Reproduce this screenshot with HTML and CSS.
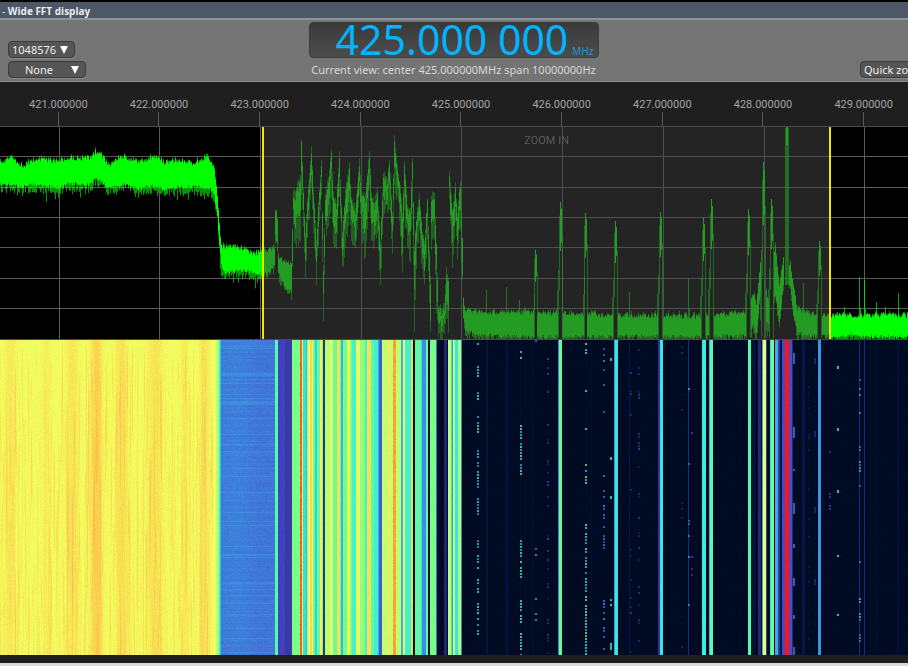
FILE: index.html
```html
<!DOCTYPE html>
<html lang="en">
  <head>
    <meta charset="utf-8" />
    <meta name="viewport" content="width=device-width, initial-scale=1" />
    <title>Wide FFT display</title>
    <link rel="icon" href="data:," />
    <link rel="stylesheet" href="styles.css">
  </head>

  <body>
    <header class="titlebar">- <b>Wide FFT display</b></header>

    <div class="toolbar">
      <div class="selects">
        <select class="control fft-size" aria-label="FFT size">
          <option>1048576</option>
        </select>
        <select class="control averaging" aria-label="Averaging">
          <option>None</option>
        </select>
      </div>
      <div class="tuner">
        <output class="frequency"><span class="digits">425.000 000</span><span class="unit">MHz</span></output>
        <div class="view-info">Current view: center 425.000000MHz span 10000000Hz</div>
      </div>
      <div class="actions">
        <button type="button" class="control quick-zoom">Quick zoom</button>
      </div>
    </div>

    <main>
      <div class="axis">
        <span>421.000000</span>
        <span>422.000000</span>
        <span>423.000000</span>
        <span>424.000000</span>
        <span>425.000000</span>
        <span>426.000000</span>
        <span>427.000000</span>
        <span>428.000000</span>
        <span>429.000000</span>
      </div>
      <div class="spectrum">
        <canvas id="spectrum" width="908" height="212"></canvas>
        <div class="zoom-area">ZOOM IN</div>
      </div>
      <canvas id="waterfall" width="908" height="315"></canvas>
    </main>
    <footer></footer>
    <script src="script.js"></script>
  </body>
</html>
```

FILE: styles.css
```css
* {
  box-sizing: border-box;
}
body {
  margin: 0;
  background-color: #1f1f1f;
  color: #d8d8d8;
  font-family: "Noto Sans", "Open Sans", sans-serif;
  font-size: 11px;
  overflow-x: hidden;
}
.titlebar {
  height: 20px;
  padding-left: 2px;
  border-top: 2px solid #000;
  border-bottom: 2px solid #8c9494;
  background-color: #4d5767;
  color: #eee;
  font-family: "Open Sans", sans-serif;
  font-size: 10px;
  line-height: 18px;
}
.toolbar {
  display: grid;
  grid-template-columns: 1fr auto 1fr;
  height: 62px;
  padding: 2px 0 3px 8px;
  border-bottom: 1px solid #8c8c8c;
  background-color: #747474;
  overflow: hidden;
}
.selects {
  display: flex;
  flex-direction: column;
  align-items: flex-start;
  justify-content: flex-end;
  gap: 3px;
}
.control {
  height: 17px;
  margin: 0;
  padding: 0 3px;
  border: 1px solid #3c3c3c;
  border-radius: 4px;
  background-color: #555;
  color: #eee;
  font-family: inherit;
  font-size: 11px;
  line-height: 14px;
  box-shadow: 0 1px 0 #868686;
}
select.control {
  appearance: none;
  background-image: url("data:image/svg+xml,%3Csvg xmlns='http://www.w3.org/2000/svg' width='8' height='8'%3E%3Cpath d='M0 0h8L4 8z' fill='white'/%3E%3C/svg%3E");
  background-repeat: no-repeat;
  background-position: right 6px center;
}
.fft-size {
  width: 67px;
}
.averaging {
  width: 78px;
  padding-left: 16px;
}
.tuner {
  width: 290px;
  margin-right: 9px;
}
.frequency {
  display: flex;
  align-items: baseline;
  justify-content: flex-end;
  gap: 4px;
  height: 36px;
  padding-right: 4px;
  border: 1px solid #3c3c3c;
  border-radius: 4px;
  background-image: linear-gradient(#3a3a3a, #4c4c4c);
  color: #00b4ff;
  line-height: 32px;
}
.digits {
  font-size: 41px;
}
.unit {
  color: #0e9ad8;
  font-size: 10px;
}
.view-info {
  margin-top: 4px;
  line-height: 16px;
  text-align: center;
  white-space: nowrap;
}
.actions {
  display: flex;
  align-items: flex-end;
  justify-content: flex-end;
}
.quick-zoom {
  width: 72px;
  margin-right: -24px;
  text-align: left;
  white-space: nowrap;
}
main {
  overflow: hidden;
}
.axis {
  display: grid;
  grid-template-columns: repeat(9, 1fr);
  height: 45px;
  margin-right: -6px;
  padding: 15px 0 0 8px;
  border-bottom: 1px solid #4a4a4a;
  color: #a4a4a4;
  font-family: "Liberation Sans Narrow", "Roboto", sans-serif;
  font-size: 11px;
  line-height: 15px;
  text-align: center;
}
.axis span::after {
  content: "";
  display: block;
  width: 1px;
  height: 14px;
  margin: 0 auto;
  background-color: #5a5a5a;
}
canvas {
  display: block;
  width: 100%;
}
.spectrum {
  position: relative;
  border-bottom: 1px solid #4a4a4a;
}
#spectrum {
  height: 212px;
}
#waterfall {
  height: 315px;
}
.zoom-area {
  position: absolute;
  top: 0;
  bottom: 0;
  left: 28.9%;
  right: 8.5%;
  padding-top: 6px;
  border: solid #f0e800;
  border-width: 0 2px;
  background-color: rgba(68, 68, 68, 0.53);
  color: #5c5c5c;
  font-family: "Liberation Sans Narrow", "Roboto", sans-serif;
  font-size: 11px;
  line-height: 15px;
  text-align: center;
}
footer {
  height: 11px;
  border-bottom: 3px solid #dcdad5;
}
```

FILE: script.js
```javascript
var seed = 7;
function rnd() {
  seed = (seed * 16807) % 2147483647;
  return seed / 2147483647;
}

// trace envelope: x, top, bottom
var envelope = [
  [0, 37, 60], [10, 31, 60], [22, 40, 62], [33, 34, 60], [58, 34, 63], [68, 32, 59],
  [90, 32, 60], [95, 26, 54], [101, 29, 56], [109, 39, 64], [118, 31, 61], [124, 31, 60],
  [138, 36, 64], [155, 31, 60], [165, 36, 65], [178, 34, 62], [193, 37, 62], [204, 32, 62],
  [209, 32, 63], [214, 41, 71], [217, 72, 92], [219, 100, 118], [221, 120, 140], [225, 122, 149],
  [230, 121, 147], [245, 122, 146], [252, 127, 147], [263, 126, 150], [270, 122, 147],
  [274, 121, 140], [275, 83, 112], [277, 92, 120], [278, 129, 148], [282, 135, 157],
  [287, 138, 165], [291, 137, 166], [292, 105, 135], [293, 64, 90], [295, 68, 112],
  [300, 50, 105], [301, 14, 55], [303, 65, 90], [305, 108, 138], [308, 60, 90], [311, 25, 58],
  [313, 62, 92], [316, 115, 144], [318, 78, 106], [321, 35, 60], [323, 140, 181],
  [325, 66, 95], [327, 60, 98], [331, 28, 65], [333, 68, 110], [336, 75, 112], [339, 26, 60],
  [342, 108, 138], [345, 65, 112], [349, 41, 78], [351, 72, 100], [355, 85, 118],
  [359, 34, 66], [361, 66, 94], [365, 70, 130], [369, 25, 54], [371, 70, 105], [374, 76, 112],
  [377, 64, 98], [380, 115, 157], [383, 50, 76], [387, 55, 80], [389, 38, 70],
  [392, 84, 120], [394, 13, 50], [398, 48, 72], [400, 60, 98], [402, 88, 135], [404, 36, 76],
  [407, 82, 112], [410, 85, 125], [412, 33, 68], [414, 120, 193], [417, 83, 105],
  [419, 70, 98], [422, 108, 140], [424, 118, 154], [427, 73, 98], [430, 155, 202],
  [431, 72, 115], [434, 68, 98], [436, 120, 170], [438, 180, 203], [441, 184, 206],
  [444, 178, 200], [446, 146, 183], [448, 150, 190], [449, 47, 70], [452, 86, 130],
  [455, 60, 86], [457, 88, 128], [460, 56, 92], [462, 112, 150], [463, 172, 193],
  [465, 184, 205], [480, 186, 210], [520, 186, 212], [560, 187, 212], [620, 189, 211],
  [700, 190, 212], [745, 187, 211], [753, 166, 200], [756, 180, 210], [760, 135, 165],
  [762, 148, 195], [768, 176, 198], [775, 120, 170], [779, 160, 198], [783, 132, 160],
  [786, 150, 158], [790, 138, 160], [793, 160, 190], [797, 182, 208], [805, 186, 211],
  [825, 189, 211], [908, 189, 212]
];

// carriers: x, top, half width
var spikes = [
  [486, 163, 1], [506, 160, 1], [519, 173, 1], [535, 123, 2], [560, 75, 3], [585, 86, 2],
  [615, 94, 3], [629, 165, 1], [660, 85, 3], [688, 151, 1], [703, 91, 3], [711, 72, 3],
  [748, 82, 3], [763, 35, 3], [771, 72, 3], [786, 0, 3], [803, 156, 1], [819, 114, 3],
  [844, 180, 1], [859, 150, 1], [864, 153, 1], [876, 175, 1], [885, 180, 1], [898, 166, 1]
];

function drawSpectrum() {
  var ctx = document.getElementById("spectrum").getContext("2d");
  ctx.fillStyle = "#000";
  ctx.fillRect(0, 0, 908, 212);
  ctx.fillStyle = "#5a5a5a";
  [29, 60, 90, 120, 151, 181].forEach((y) => ctx.fillRect(0, y, 908, 1));
  [59, 159, 260, 361, 461, 562, 663, 764, 864].forEach((x) =>
    ctx.fillRect(x, 0, 1, 212)
  );

  var k = 0;
  for (var x = 0; x < 908; x++) {
    while (envelope[k + 1][0] <= x) k++;
    var a = envelope[k];
    var b = envelope[k + 1];
    var t = (x - a[0]) / (b[0] - a[0]);
    var top = a[1] + (b[1] - a[1]) * t;
    var bottom = a[2] + (b[2] - a[2]) * t;
    var inGap = spikes.some((s) => s[2] > 1 && Math.abs(s[0] - x) < s[2]);
    if (inGap) continue;
    var busy = x > 292 && x < 462;
    top += rnd() * 5 - 3;
    bottom -= rnd() * 4;
    if (busy) {
      // bursts fade towards their feet
      var core = (bottom - top) * (0.45 + rnd() * 0.35);
      ctx.fillStyle = "rgba(0, 255, 0, 0.5)";
      ctx.fillRect(x, top - rnd() * 5, 1, bottom - top + 5 + rnd() * 14);
      ctx.fillStyle = "#00ff00";
      ctx.fillRect(x, top + rnd() * 6, 1, core);
      continue;
    }
    ctx.fillStyle = "#00ff00";
    ctx.fillRect(x, top, 1, bottom - top);
    // sparse lower tail
    ctx.fillStyle = "rgba(0, 255, 0, 0.6)";
    ctx.fillRect(x, bottom, 1, rnd() * 9 + (rnd() > 0.94 ? 7 : 0));
    ctx.fillRect(x, top - rnd() * 3, 1, 4);
  }

  spikes.forEach(([x, top, half]) => {
    var h = 211 - top;
    if (half == 1) {
      ctx.fillStyle = "rgba(0, 255, 0, 0.65)";
      ctx.fillRect(x, top, 1, h);
      ctx.fillRect(x + 1, top + h * 0.5, 1, h * 0.3);
      return;
    }
    if (top == 0) {
      ctx.fillStyle = "rgba(0, 255, 0, 0.6)";
      ctx.fillRect(x - 1, 1, 4, 157);
      ctx.fillStyle = "#00ff00";
      ctx.fillRect(x, 0, 2, 18);
      return;
    }
    ctx.fillStyle = "#00ff00";
    ctx.fillRect(x, top, 1, h * 0.36);
    ctx.fillRect(x + 1, top + h * 0.05, 1, h * 0.25);
    ctx.fillStyle = "rgba(0, 255, 0, 0.55)";
    ctx.fillRect(x - 1, top + h * 0.1, 1, h * 0.55);
    ctx.fillRect(x + 2, top + h * 0.25, 1, h * 0.75);
    ctx.fillRect(x - half + 1, top + h * 0.5, 1, h * 0.5);
    ctx.fillRect(x - half, top + h * 0.65, 1, h * 0.25);
  });
}

var palette = [
  [0, 0, 9, 29], [0.12, 0, 26, 78], [0.25, 48, 46, 140], [0.33, 68, 68, 196],
  [0.45, 62, 128, 220], [0.55, 54, 180, 232], [0.62, 56, 240, 216],
  [0.7, 120, 255, 134], [0.8, 242, 255, 96], [0.88, 255, 176, 64], [1, 255, 16, 12]
];

function color(v) {
  v = Math.max(0, Math.min(1, v));
  var i = 0;
  while (i < palette.length - 2 && palette[i + 1][0] < v) i++;
  var p = palette[i];
  var q = palette[i + 1];
  var t = (v - p[0]) / (q[0] - p[0]);
  return [1, 2, 3].map((c) => p[c] + (q[c] - p[c]) * t);
}

// steady signals: x, width, level
var stripes = [
  [0, 216, 0.8], [216, 2, 0.76], [218, 1, 0.71], [219, 1, 0.65], [220, 1, 0.56],
  [221, 54, 0.44], [275, 3, 0.66], [278, 7, 0.32], [285, 7, 0.29], [292, 8, 0.7],
  [300, 2, 0.94], [302, 1, 0.77], [303, 3, 0.6], [306, 1, 0.56], [307, 1, 0.72],
  [308, 5, 0.8], [310, 2, 0.84], [313, 2, 0.68], [315, 2, 0.58], [317, 3, 0.68],
  [320, 2, 0.82], [322, 1, 0.7], [323, 2, 0.25], [325, 5, 0.75], [330, 3, 0.79],
  [333, 4, 0.68], [337, 3, 0.83], [340, 1, 0.68], [341, 2, 0.55], [343, 4, 0.69],
  [347, 3, 0.81], [350, 2, 0.7], [352, 4, 0.64], [356, 4, 0.79], [360, 5, 0.72],
  [365, 2, 0.64], [367, 4, 0.83], [371, 3, 0.67], [374, 4, 0.63], [378, 1, 0.55],
  [379, 3, 0.38], [382, 12, 0.76], [388, 2, 0.82], [393, 3, 0.89], [396, 5, 0.76],
  [401, 2, 0.55], [403, 2, 0.8], [405, 6, 0.63], [411, 2, 0.84], [413, 2, 0.05],
  [415, 6, 0.67], [421, 1, 0.6], [422, 4, 0.48], [426, 2, 0.67], [428, 2, 0.05],
  [430, 6, 0.7], [436, 1, 0.4], [444, 3, 0.2], [448, 3, 0.76], [451, 1, 0.6],
  [452, 1, 0.5], [453, 2, 0.76], [455, 3, 0.61], [458, 3, 0.74], [461, 1, 0.45],
  [486, 2, 0.09], [506, 2, 0.08], [520, 1, 0.05], [532, 1, 0.06], [558, 1, 0.44],
  [559, 3, 0.68], [591, 1, 0.05], [614, 1, 0.5], [615, 3, 0.61], [629, 1, 0.12],
  [658, 2, 0.27], [660, 3, 0.61], [688, 1, 0.22], [702, 4, 0.62], [709, 1, 0.55],
  [710, 3, 0.67], [748, 3, 0.66], [753, 2, 0.08], [758, 3, 0.22], [762, 1, 0.55],
  [763, 3, 0.8], [766, 1, 0.3], [770, 1, 0.6], [771, 3, 0.69], [775, 3, 0.54],
  [778, 2, 0.28], [780, 2, 0.1], [782, 3, 0.34], [785, 4, 1], [789, 3, 0.35],
  [792, 1, 0.22], [802, 3, 0.11], [814, 1, 0.05], [818, 3, 0.49], [859, 1, 0.2],
  [864, 1, 0.2], [876, 1, 0.06], [897, 2, 0.07]
];

// keyed signals: x, level, chance, then on/off ranges
var bursts = [
  [477, 0.58, 0.6, [3, 9], [23, 44], [52, 93], [107, 174], [191, 306]],
  [520, 0.62, 0.65, [8, 18], [85, 134], [200, 315]],
  [535, 0.5, 0.25, [0, 3], [205, 235], [255, 302]],
  [547, 0.25, 0.22, [0, 315]],
  [585, 0.63, 0.75, [0, 15], [50, 53], [88, 91], [124, 145], [184, 315]],
  [603, 0.45, 0.35, [8, 85], [120, 220], [260, 310]],
  [610, 0.64, 1, [18, 21], [117, 120], [156, 159], [259, 261], [264, 266], [303, 310]],
  [630, 0.24, 0.13, [20, 315]],
  [638, 0.25, 0.25, [0, 65], [90, 315]],
  [681, 0.18, 0.12, [0, 315]],
  [688, 0.45, 0.12, [0, 315]],
  [691, 0.26, 0.25, [40, 52], [80, 110], [195, 235]],
  [793, 0.45, 1, [13, 24], [87, 98], [129, 131], [163, 174], [204, 208], [238, 246], [275, 279], [307, 315]],
  [808, 0.1, 0.3, [10, 315]],
  [814, 0.22, 1, [18, 24], [91, 97], [167, 173], [239, 245]],
  [829, 0.25, 0.3, [72, 76], [111, 114], [153, 170]],
  [837, 0.66, 1, [26, 29], [88, 91], [150, 153], [215, 217], [274, 276]],
  [859, 0.5, 0.35, [15, 57], [72, 75], [103, 150], [218, 222], [258, 302]]
];

// warmer columns of the wide carrier on the left: x, spread, gain
var warm = [
  [10, 6, 0.02], [46, 5, 0.014], [72, 6, 0.024], [96, 6, 0.04],
  [121, 6, 0.028], [155, 8, 0.026], [184, 4, 0.018], [204, 5, 0.026]
];

function drawWaterfall() {
  var ctx = document.getElementById("waterfall").getContext("2d");
  var img = ctx.createImageData(908, 315);
  var levels = new Array(908).fill(0.015);
  stripes.forEach(([x, w, v]) => levels.fill(v, x, x + w));

  var rows = [];
  for (var y = 0; y < 315; y++) {
    rows.push(rnd() > 0.88 ? 0.04 : rnd() * 0.02);
  }

  for (var x = 0; x < 908; x++) {
    var base = levels[x];
    var streak = 0;
    var target = 0;
    var hot = 0;
    warm.forEach(([c, w, gain]) => {
      hot += Math.exp(-Math.pow((x - c) / w, 2)) * gain;
    });
    for (var y = 0; y < 315; y++) {
      var v = base;
      if (x < 218) {
        if (rnd() > 0.98) target = Math.pow(rnd(), 3) * 0.035;
        streak += (target - streak) * 0.08;
        v += x < 213 ? hot + streak + (rnd() - 0.4) * 0.016 : (rnd() - 0.5) * 0.01;
      } else if (x > 220 && x < 275) {
        v += rows[y] + (rnd() - 0.7) * 0.035 + Math.cos((x - 236) / 9) * 0.01 - 0.005;
      } else if (base > 0.2) {
        v += (rnd() - 0.5) * (base > 0.87 && base < 1 ? 0.04 : 0.015);
      } else {
        v += (rnd() - 0.5) * 0.015;
      }
      var c = color(v);
      var i = (y * 908 + x) * 4;
      img.data[i] = c[0];
      img.data[i + 1] = c[1];
      img.data[i + 2] = c[2];
      img.data[i + 3] = 255;
    }
  }
  ctx.putImageData(img, 0, 0);

  bursts.forEach(([x, level, chance, ...ranges]) => {
    ranges.forEach(([from, to]) => {
      for (var y = from; y < to; y += chance == 1 ? 1 : 3) {
        if (rnd() > chance) continue;
        var c = color(level + (chance == 1 ? 0 : (rnd() - 0.5) * 0.18));
        ctx.fillStyle = `rgba(${c[0]}, ${c[1]}, ${c[2]}, 0.75)`;
        ctx.fillRect(x, y, 2, chance == 1 ? 1 : 2);
      }
    });
  });
}

drawSpectrum();
drawWaterfall();
```
